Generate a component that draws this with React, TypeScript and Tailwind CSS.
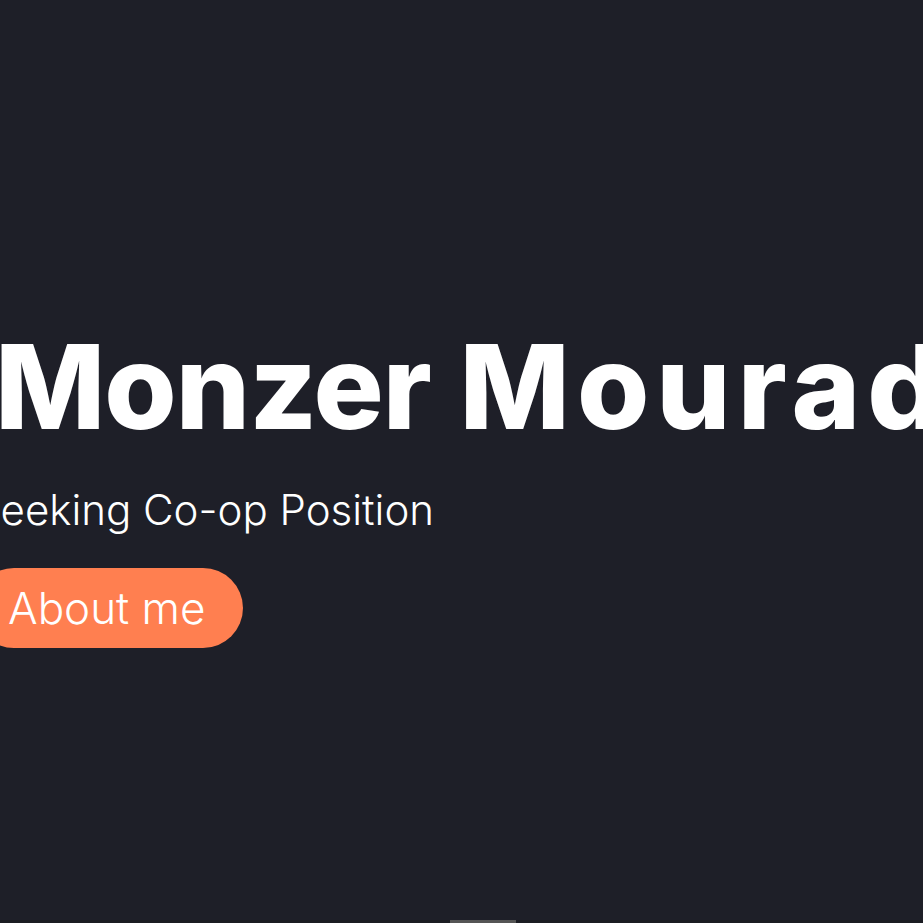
import React from "react";

export default function App() {
  return (
    <div className="relative h-[923px] w-[923px] overflow-hidden bg-[#1e1f28] text-white" style={{ fontFamily: "Inter, 'Noto Sans', sans-serif" }}>
      <div className="flex flex-col items-start pl-0 pt-[312px] ml-[-26px]">
        <h1 className="whitespace-nowrap text-[117px] font-extrabold leading-[150px] tracking-[-1px] ml-[21px]">
          Monzer <span className="ml-[4px] tracking-[7px]">Mourad</span>
        </h1>
        <p className="whitespace-nowrap text-[42px] font-light leading-[60px] mt-[18px]">Seeking Co-op Position</p>
        <button className="mt-[28px] h-[80px] rounded-full bg-[#ff7f50] pl-[34px] pr-[37px] text-[44px] font-light leading-none text-white">About me</button>
      </div>
      <div className="absolute bottom-0 left-0 h-[3px] w-full bg-[#1b1c22]" />
      <div className="absolute bottom-0 left-[450px] h-[3px] w-[66px] bg-[#555555]" />
    </div>
  );
}
